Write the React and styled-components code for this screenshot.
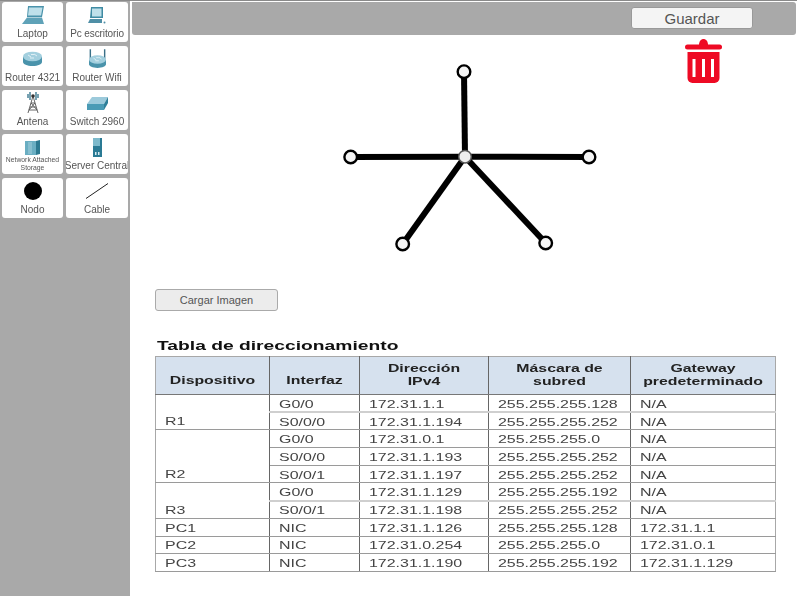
import React from "react";
import styled, { createGlobalStyle } from "styled-components";

const Global = createGlobalStyle`
  html, body { margin: 0; padding: 0; height: 100%; background: #fff; overflow: hidden; }
  #root { height: 100%; }
  * { box-sizing: border-box; }
`;
const Page = styled.div`
  display: grid; grid-template-columns: 130px 1fr; height: 596px; width: 797px;
  font-family: "Liberation Sans", Arial, sans-serif; color: #333; border-top: 1px solid #8a8a8a;
`;
const Sidebar = styled.aside`
  background: #a9a9a9; padding: 1px 2px 0 2px;
  display: grid; grid-template-columns: 61px 62px; column-gap: 3px; row-gap: 4px; grid-auto-rows: 40px; align-content: start;
`;
const Tile = styled.div`
  background: #fff; border-radius: 3px; display: flex; flex-direction: column; align-items: center;
  justify-content: space-between; padding: 2px 0 2px; overflow: hidden; filter: blur(0.3px);
`;
const TileIcon = styled.div`height: 22px; flex: none; display: flex; align-items: center; justify-content: center;`;
const TileLabel = styled.span`
  font-size: ${p => p.$size || 10}px; line-height: ${p => p.$size ? "8px" : "12px"}; color: #555; text-align: center;
  letter-spacing: ${p => p.$track || 0}px; white-space: ${p => p.$size ? "normal" : "nowrap"};
  margin-top: ${p => p.$size ? "-3px" : "0"};
`;
const Main = styled.main`display: flex; flex-direction: column; align-items: flex-start; min-width: 0;`;
const Toolbar = styled.div`
  align-self: stretch; height: 33px; margin: 1px 1px 0 2px; background: #a9a9a9; border-radius: 0 3px 3px 3px;
  display: flex; justify-content: flex-end; align-items: flex-start; padding: 5px 43px 0 0;
`;
const SaveButton = styled.button`
  width: 122px; height: 22px; padding: 0; background: #f4f4f4; border: 1px solid #999; border-radius: 3px;
  font: 15px "Liberation Sans", Arial, sans-serif; color: #555;
`;
const Canvas = styled.div`position: relative; width: 667px; height: 254px; flex: none;`;
const Trash = styled.svg`position: absolute; left: 555px; top: 4px;`;
const Topology = styled.svg`display: block;`;
const LoadButton = styled.button`
  margin-left: 25px; width: 123px; height: 22px; padding: 0; background: #ececec; border: 1px solid #aaa; border-radius: 3px;
  font: 11px "Liberation Sans", Arial, sans-serif; color: #555;
`;
const Figure = styled.section`margin: 27px 0 0 25px; width: 620px; filter: blur(0.35px);`;
const Title = styled.h2`
  margin: 0 0 1px 2px; width: fit-content; height: 17px; font-size: 12.5px; line-height: 17px; font-weight: 700; color: #111;
  transform: scaleX(1.54); transform-origin: left center; white-space: nowrap;
`;
const Table = styled.table`
  border-collapse: collapse; table-layout: fixed; width: 620px; border: 1px solid #a8a8a8;
  font-size: 11px; color: #444;
`;
const Head = styled.th`
  background: #d6e1ee; height: 38px; font-size: 11px; line-height: 13px; font-weight: 700; color: #222;
  text-align: center; border-right: 1px solid #666; border-bottom: 1px solid #777; padding: 0 0 ${p => p.$low ? "7px" : "2px"};
  vertical-align: ${p => p.$low ? "bottom" : "middle"};
  &:last-child { border-right: 0; }
`;
const HeadLine = styled.span`display: block; white-space: nowrap; transform: scaleX(1.44);`;
const Cell = styled.td`
  height: 17.7px; padding: 2px 0 0 9px; line-height: 13px; white-space: nowrap;
  border-right: 1px solid #666;
  border-bottom: ${p => p.$noLine ? "0" : p.$soft ? "2px solid #cfcfcf" : "1px solid #9a9a9a"};
  &:last-child { border-right: 0; }
`;
const CellText = styled.span`display: inline-block; transform: scaleX(1.45); transform-origin: left center;`;
const DeviceCell = styled(Cell)`vertical-align: bottom; padding-bottom: 1px;`;

const Laptop = () => <svg width="22" height="19" viewBox="0 0 22 19"><path d="M6 0h16l-2 11H5z" fill="#4a93ab"/><path d="M7 1.500h13.500l-1.500 8H6z" fill="#bfe0ea"/><path d="M5 11.500h15l2 6.500H0z" fill="#5fa2b8"/></svg>;
const Desktop = () => <svg width="18" height="17" viewBox="0 0 18 17"><path d="M3 0h12v11H2z" fill="#3f8ba3"/><path d="M4 1.500h9.500v8H4z" fill="#bfe0ea"/><path d="M2 12h12v4H0z" fill="#4f8fa6"/><circle cx="16.500" cy="15.500" r="1" fill="#4f8fa6"/></svg>;
const RouterShape = ({ y = 0 }) => <g transform={`translate(0 ${y})`}><path d="M0 6v5c0 2 4 4 9.500 4s9.500-2 9.500-4V6z" fill="#4a93ab"/><ellipse cx="9.500" cy="5.500" rx="9.500" ry="4.800" fill="#a3cfde"/><path d="M5 4l3 2M11 3l3 2M8 3.500h3M7 7h4" stroke="#e6f3f7" strokeWidth=".9"/></g>;
const Router = () => <svg width="19" height="16" viewBox="0 0 19 16"><RouterShape/></svg>;
const Wifi = () => <svg width="17" height="20" viewBox="0 0 19 22"><path d="M1.500 0v12M17.500 0v12" stroke="#3a7088" strokeWidth="1.600"/><RouterShape y="6"/></svg>;
const Antenna = () => <svg width="12" height="22" viewBox="0 0 12 22"><path d="M6 4L1 21M6 4l5 17M3 15h6M2 18h8M4 11h4M4 11l6 7M8 11l-6 7" stroke="#555" fill="none" strokeWidth=".9"/><path d="M3 0v8M9 0v8M1 2v4M11 2v4" stroke="#2d6f88" strokeWidth="1.300"/><circle cx="6" cy="4" r="1.800" fill="#333"/></svg>;
const Switch = () => <svg width="21" height="13" viewBox="0 0 21 13"><path d="M5 0h16l-4 7H0z" fill="#9ccadb"/><path d="M0 7h17v6H0z" fill="#4a9bb5"/><path d="M17 7l4-7v6l-4 7z" fill="#2e7f99"/></svg>;
const Nas = () => <svg width="15" height="15" viewBox="0 0 15 15"><path d="M0 1h11v14H0z" fill="#6aaec2"/><path d="M11 1l4-1v14l-4 1z" fill="#2d7a91"/><path d="M4 2v12M6 2v12" stroke="#cce6ee" strokeWidth=".6"/></svg>;
const Server = () => <svg width="9" height="19" viewBox="0 0 9 19"><path d="M0 0h9v19H0z" fill="#2a7a94"/><path d="M0 0h7v8H0z" fill="#7db9cb"/><path d="M2 14h1.500v3H2zM5 14h1.500v3H5z" fill="#d7ebf1"/></svg>;
const Dot = () => <svg width="18" height="18" viewBox="0 0 18 18"><circle cx="9" cy="9" r="9" fill="#000"/></svg>;
const CableIcon = () => <svg width="22" height="16" viewBox="0 0 22 16"><path d="M0 15.500L22 .5" stroke="#222" strokeWidth="1"/></svg>;

const tools = [
  { label: "Laptop", Icon: Laptop }, { label: "Pc escritorio", Icon: Desktop, track: -0.1 },
  { label: "Router 4321", Icon: Router }, { label: "Router Wifi", Icon: Wifi },
  { label: "Antena", Icon: Antenna }, { label: "Switch 2960", Icon: Switch },
  { label: "Network Attached Storage", Icon: Nas, size: 6.8 }, { label: "Server Central", Icon: Server },
  { label: "Nodo", Icon: Dot }, { label: "Cable", Icon: CableIcon },
];

const center = [335, 121.7];
const ends = [[334, 36.7], [220.7, 122], [459, 122], [272.7, 209], [415.7, 208]];

const rows = [
  ["", "G0/0", "172.31.1.1", "255.255.255.128", "N/A"],
  ["R1", "S0/0/0", "172.31.1.194", "255.255.255.252", "N/A"],
  ["", "G0/0", "172.31.0.1", "255.255.255.0", "N/A"],
  ["", "S0/0/0", "172.31.1.193", "255.255.255.252", "N/A"],
  ["R2", "S0/0/1", "172.31.1.197", "255.255.255.252", "N/A"],
  ["", "G0/0", "172.31.1.129", "255.255.255.192", "N/A"],
  ["R3", "S0/0/1", "172.31.1.198", "255.255.255.252", "N/A"],
  ["PC1", "NIC", "172.31.1.126", "255.255.255.128", "172.31.1.1"],
  ["PC2", "NIC", "172.31.0.254", "255.255.255.0", "172.31.0.1"],
  ["PC3", "NIC", "172.31.1.190", "255.255.255.192", "172.31.1.129"],
];

export default function App() {
  return (
    <Page>
      <Global />
      <Sidebar>
        {tools.map(({ label, Icon, size, track }) => (
          <Tile key={label}>
            <TileIcon><Icon /></TileIcon>
            <TileLabel $size={size} $track={track}>{label}</TileLabel>
          </Tile>
        ))}
      </Sidebar>
      <Main>
        <Toolbar><SaveButton>Guardar</SaveButton></Toolbar>
        <Canvas>
          <Trash width="37" height="44" viewBox="0 0 37 44">
            <path d="M2.500 8h32" stroke="#ee0a24" strokeWidth="5" strokeLinecap="round"/>
            <path d="M14 6c0-8 9-8 9 0z" fill="#ee0a24"/>
            <path d="M2.500 13h32v26a5 5 0 0 1-5 5h-22a5 5 0 0 1-5-5z" fill="#ee0a24"/>
            <path d="M9 20v18M18.500 20v18M27.500 20v18" stroke="#fff" strokeWidth="3"/>
          </Trash>
          <Topology width="667" height="254" viewBox="0 0 667 254">
            {ends.map(([x, y]) => (
              <line key={`${x}-${y}`} x1={center[0]} y1={center[1]} x2={x} y2={y} stroke="#000" strokeWidth="6"/>
            ))}
            {ends.map(([x, y]) => (
              <circle key={`c${x}-${y}`} cx={x} cy={y} r="6.300" fill="#f5f5f5" stroke="#000" strokeWidth="2.400"/>
            ))}
            <circle cx={center[0]} cy={center[1]} r="6.300" fill="#eee" stroke="#555" strokeWidth="1.500"/>
          </Topology>
        </Canvas>
        <LoadButton>Cargar Imagen</LoadButton>
        <Figure>
          <Title>Tabla de direccionamiento</Title>
          <Table>
            <colgroup>
              <col style={{ width: 114 }}/><col style={{ width: 90 }}/><col style={{ width: 129 }}/><col style={{ width: 142 }}/><col style={{ width: 145 }}/>
            </colgroup>
            <thead>
              <tr>
                <Head $low><HeadLine>Dispositivo</HeadLine></Head>
                <Head $low><HeadLine>Interfaz</HeadLine></Head>
                <Head><HeadLine>Dirección</HeadLine><HeadLine>IPv4</HeadLine></Head>
                <Head><HeadLine>Máscara de</HeadLine><HeadLine>subred</HeadLine></Head>
                <Head><HeadLine>Gateway</HeadLine><HeadLine>predeterminado</HeadLine></Head>
              </tr>
            </thead>
            <tbody>
              {rows.map((r, i) => (
                <tr key={i}>
                  <DeviceCell $noLine={r[0] === ""}><CellText>{r[0]}</CellText></DeviceCell>
                  {r.slice(1).map((v, j) => (
                    <Cell key={j} $soft={i === 0 || i === 5}><CellText>{v}</CellText></Cell>
                  ))}
                </tr>
              ))}
            </tbody>
          </Table>
        </Figure>
      </Main>
    </Page>
  );
}
